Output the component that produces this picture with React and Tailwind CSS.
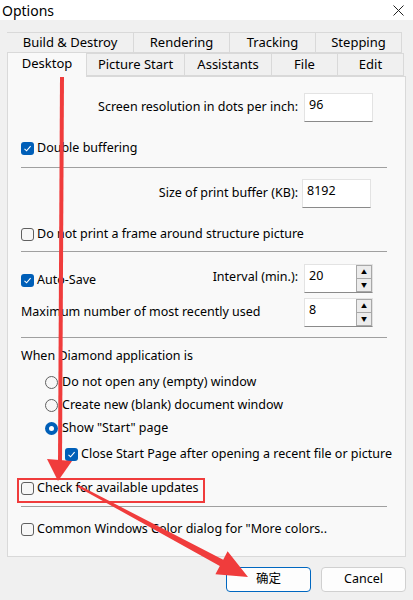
import React from 'react';

const font = { fontFamily: '"Noto Sans", "Noto Sans CJK SC", sans-serif' };

function Check({ on }) {
  return on ? (
    <span className="flex h-[13px] w-[13px] shrink-0 items-center justify-center rounded-[3px] bg-[#005fb8]">
      <svg width="9" height="9" viewBox="0 0 9 9" fill="none">
        <path d="M1.5 4.8 L3.6 6.8 L7.6 2.2" stroke="white" strokeWidth="1.1" />
      </svg>
    </span>
  ) : (
    <span className="h-[13px] w-[13px] shrink-0 rounded-[3px] border border-[#606060] bg-[#f7f7f7]" />
  );
}

function Radio({ on }) {
  return on ? (
    <span className="flex h-[13px] w-[13px] shrink-0 items-center justify-center rounded-full bg-[#005fb8]">
      <span className="h-[5px] w-[5px] rounded-full bg-white" />
    </span>
  ) : (
    <span className="h-[13px] w-[13px] shrink-0 rounded-full border border-[#606060] bg-[#f7f7f7]" />
  );
}

function CheckRow({ on, label, className = '' }) {
  return (
    <div className={`flex h-[20px] items-center gap-[3px] whitespace-nowrap ${className}`}>
      <Check on={on} />
      <span>{label}</span>
    </div>
  );
}

function Field({ value, spin, className = '' }) {
  return (
    <div className={`relative flex h-[29px] w-[69px] shrink-0 items-start border border-[#e3e3e3] border-b-[#8a8a8a] bg-white pl-[4px] pt-[2px] ${className}`}>
      <span>{value}</span>
      {spin ? (
        <div className="absolute right-0 top-0 flex h-full w-[16px] flex-col">
          <div className="flex flex-1 items-center justify-center border border-[#a8a8a8] bg-[#ececec] text-[6px] leading-none">▲</div>
          <div className="flex flex-1 items-center justify-center border border-t-0 border-[#a8a8a8] bg-[#ececec] text-[6px] leading-none">▼</div>
        </div>
      ) : null}
    </div>
  );
}

function Sep({ className = '' }) {
  return <div className={`h-px bg-[#a0a0a0] ${className}`} />;
}

function Tab({ label, className = '' }) {
  return (
    <div className={`flex items-center justify-center border border-l-0 border-[#d9d9d9] bg-[#f0f0f0] ${className}`}>
      {label}
    </div>
  );
}

export default function App() {
  return (
    <div className="relative h-[600px] w-[413px] overflow-hidden bg-[#f0f0f0] text-[12.5px] text-black" style={font}>
      <div className="flex h-[20px] items-center justify-between bg-white pl-[2px] pr-[9px]">
        <span className="text-[14px]">Options</span>
        <svg width="11" height="11" viewBox="0 0 11 11">
          <path d="M0.5 0.5 L10.5 10.5 M10.5 0.5 L0.5 10.5" stroke="#222" strokeWidth="1" />
        </svg>
      </div>

      {/* tabs */}
      <div className="ml-[7px] mt-[12px] flex h-[21px] text-[13px]">
        <Tab label="Build & Destroy" className="w-[127px] border-l" />
        <Tab label="Rendering" className="w-[96px]" />
        <Tab label="Tracking" className="w-[86px]" />
        <Tab label="Stepping" className="w-[86px]" />
      </div>
      <div className="relative ml-[7px] flex h-[23px] text-[13px]">
        <div className="z-10 -mt-px flex h-[25px] w-[80px] items-center justify-center border border-b-0 border-[#d9d9d9] bg-[#f9f9f9] pb-[2px]">Desktop</div>
        <Tab label="Picture Start" className="w-[98px]" />
        <Tab label="Assistants" className="w-[87px]" />
        <Tab label="File" className="w-[66px]" />
        <Tab label="Edit" className="w-[66px]" />
      </div>

      {/* panel */}
      <div className="ml-[7px] h-[481px] w-[399px] border border-[#d9d9d9] bg-[#f9f9f9] pl-[13px] pr-[18px] pt-[16px]">
        <div className="flex items-center justify-end gap-[6px] pr-[14px]">
          <span>Screen resolution in dots per inch:</span>
          <Field value="96" />
        </div>
        <CheckRow on label="Double buffering" className="mt-[16px]" />
        <Sep className="mt-[9px]" />
        <div className="mt-[11px] flex items-center justify-end gap-[4px] pr-[16px]">
          <span>Size of print buffer (KB):</span>
          <Field value="8192" className="h-[28px]" />
        </div>
        <CheckRow label="Do not print a frame around structure picture" className="mt-[16px]" />
        <Sep className="mt-[7px]" />
        <div className="mt-[12px] flex items-center pr-[14px]">
          <CheckRow on label="Auto-Save" className="mt-[3px]" />
          <span className="ml-auto mr-[6px] -mt-[3px]">Interval (min.):</span>
          <Field value="20" spin />
        </div>
        <div className="mt-[5px] flex items-center pr-[14px]">
          <span>Maximum number of most recently used</span>
          <Field value="8" spin className="ml-auto" />
        </div>
        <Sep className="mt-[10px]" />
        <div className="mt-[8px] flex h-[20px] items-center">When Diamond application is</div>
        <div className="mt-[5px] whitespace-nowrap pl-[24px]">
          <div className="flex h-[23px] items-center gap-[4px]"><Radio /><span>Do not open any (empty) window</span></div>
          <div className="flex h-[23px] items-center gap-[4px]"><Radio /><span>Create new (blank) document window</span></div>
          <div className="flex h-[23px] items-center gap-[4px]"><Radio on /><span>Show "Start" page</span></div>
          <div className="mt-[3px] flex h-[23px] items-center gap-[3px] pl-[20px]"><Check on /><span>Close Start Page after opening a recent file or picture</span></div>
        </div>
        <CheckRow label="Check for available updates" className="mt-[12px]" />
        <Sep className="mt-[8px]" />
        <CheckRow label={'Common Windows Color dialog for "More colors..'} className="mt-[12px]" />
      </div>

      {/* buttons */}
      <div className="mr-[7px] mt-[10px] flex justify-end gap-[10px]">
        <button className="h-[25px] w-[85px] rounded-[4px] border border-[#0067c0] bg-[#fdfdfd] text-[12.5px]">确定</button>
        <button className="h-[25px] w-[85px] rounded-[4px] border border-[#d0d0d0] bg-[#fdfdfd] text-[12.5px]">Cancel</button>
      </div>

      {/* annotation overlay */}
      <svg className="pointer-events-none absolute left-0 top-0" width="413" height="600" viewBox="0 0 413 600">
        <rect x="9" y="53" width="77" height="22" fill="none" stroke="#f03c3c" strokeWidth="2" />
        <rect x="18" y="479" width="186" height="23" fill="none" stroke="#f03c3c" strokeWidth="2" />
        <path d="M62 76 L60 462" stroke="#f03c3c" strokeWidth="4" />
        <polygon points="47,459 72,461 58,481" fill="#f03c3c" />
        <polygon points="78.5,485.1 223.2,559.7 227.6,551.3 248,577 215.4,574.3 219.8,565.9 77.5,486.9" fill="#f03c3c" />
      </svg>
    </div>
  );
}
